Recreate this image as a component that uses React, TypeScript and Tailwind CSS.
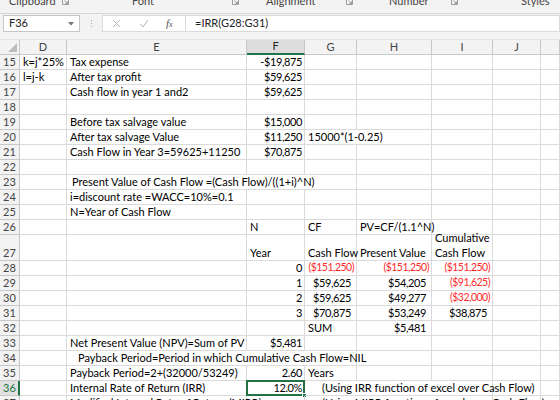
import React from 'react';

type Cell = {
  col: number;
  span?: number;
  text?: string;
  lines?: string[];
  right?: boolean;
  red?: boolean;
  pad?: boolean;
  indent?: string;
};

type Row = { n: number; tall?: boolean; cells: Cell[] };

const rows: Row[] = [
  { n: 15, cells: [{ col: 0, text: 'k=j*25%' }, { col: 1, text: 'Tax expense' }, { col: 2, text: '-$19,875', right: true }] },
  { n: 16, cells: [{ col: 0, text: 'l=j-k' }, { col: 1, text: 'After tax profit' }, { col: 2, text: '$59,625', right: true }] },
  { n: 17, cells: [{ col: 1, text: 'Cash flow in year 1 and2' }, { col: 2, text: '$59,625', right: true }] },
  { n: 18, cells: [] },
  { n: 19, cells: [{ col: 1, text: 'Before tax salvage value' }, { col: 2, text: '$15,000', right: true }] },
  {
    n: 20,
    cells: [
      { col: 1, text: 'After tax salvage Value' },
      { col: 2, text: '$11,250', right: true },
      { col: 3, span: 2, text: '15000*(1-0.25)' },
    ],
  },
  { n: 21, cells: [{ col: 1, text: 'Cash Flow in Year 3=59625+11250' }, { col: 2, text: '$70,875', right: true }] },
  { n: 22, cells: [] },
  { n: 23, cells: [{ col: 1, span: 3, text: 'Present Value of Cash Flow =(Cash Flow)/((1+i)^N)', indent: 'pl-[5px]' }] },
  { n: 24, cells: [{ col: 1, text: 'i=discount rate =WACC=10%=0.1' }] },
  { n: 25, cells: [{ col: 1, text: 'N=Year of Cash Flow' }] },
  { n: 26, cells: [{ col: 2, text: 'N' }, { col: 3, text: 'CF' }, { col: 4, text: 'PV=CF/(1.1^N)' }] },
  {
    n: 27,
    tall: true,
    cells: [
      { col: 2, text: 'Year' },
      { col: 3, text: 'Cash Flow' },
      { col: 4, text: 'Present Value' },
      { col: 5, lines: ['Cumulative', 'Cash Flow'] },
    ],
  },
  {
    n: 28,
    cells: [
      { col: 2, text: '0', right: true },
      { col: 3, text: '($151,250)', right: true, red: true },
      { col: 4, text: '($151,250)', right: true, red: true },
      { col: 5, text: '($151,250)', right: true, red: true },
    ],
  },
  {
    n: 29,
    cells: [
      { col: 2, text: '1', right: true },
      { col: 3, text: '$59,625', right: true, pad: true },
      { col: 4, text: '$54,205', right: true, pad: true },
      { col: 5, text: '($91,625)', right: true, red: true },
    ],
  },
  {
    n: 30,
    cells: [
      { col: 2, text: '2', right: true },
      { col: 3, text: '$59,625', right: true, pad: true },
      { col: 4, text: '$49,277', right: true, pad: true },
      { col: 5, text: '($32,000)', right: true, red: true },
    ],
  },
  {
    n: 31,
    cells: [
      { col: 2, text: '3', right: true },
      { col: 3, text: '$70,875', right: true, pad: true },
      { col: 4, text: '$53,249', right: true, pad: true },
      { col: 5, text: '$38,875', right: true, pad: true },
    ],
  },
  { n: 32, cells: [{ col: 3, text: 'SUM' }, { col: 4, text: '$5,481', right: true, pad: true }] },
  { n: 33, cells: [{ col: 1, text: 'Net Present Value (NPV)=Sum of PV' }, { col: 2, text: '$5,481', right: true }] },
  {
    n: 34,
    cells: [{ col: 1, span: 3, text: 'Payback Period=Period in which Cumulative Cash Flow=NIL', indent: 'pl-[11px]' }],
  },
  {
    n: 35,
    cells: [
      { col: 1, text: 'Payback Period=2+(32000/53249)' },
      { col: 2, text: '2.60', right: true },
      { col: 3, text: 'Years' },
    ],
  },
  {
    n: 36,
    cells: [
      { col: 1, text: 'Internal Rate of Return (IRR)' },
      { col: 2, text: '12.0%', right: true },
      { col: 3, span: 3, text: '(Using IRR function of excel over Cash Flow)', indent: 'pl-[17px]' },
    ],
  },
  {
    n: 37,
    cells: [
      { col: 1, text: 'Modified Internal Rate of Return (MIRR)' },
      { col: 3, span: 3, text: '(Using MIRR function of excel over Cash Flow)', indent: 'pl-[17px]' },
    ],
  },
];

const colNames = ['D', 'E', 'F', 'G', 'H', 'I', 'J', ''];
const gridCols = 'grid grid-cols-[20px_47px_180px_58px_52px_75px_61px_48px_1fr]';

function fillRow(cells: Cell[]): Cell[] {
  const out: Cell[] = [];
  let c = 0;
  while (c < 8) {
    const found = cells.find((x) => x.col === c);
    if (found) {
      out.push(found);
      c += found.span ?? 1;
    } else {
      out.push({ col: c });
      c += 1;
    }
  }
  return out;
}

function Launcher() {
  return (
    <svg width="7" height="7" viewBox="0 0 7 7" className="text-[#888]">
      <path d="M0.5 6.5V0.5h6v6z" fill="none" stroke="currentColor" strokeWidth="0.8" />
      <path d="M2.5 2.5l3 3M3.5 5.5h2v-2" fill="none" stroke="currentColor" strokeWidth="0.8" />
    </svg>
  );
}

function Ribbon() {
  const groups = [
    { label: 'Clipboard', w: 'w-[70px]', tx: 'pl-[9px]' },
    { label: 'Font', w: 'w-[170px]', tx: 'pl-[62px]' },
    { label: 'Alignment', w: 'w-[114px]', tx: 'pl-[26px]' },
    { label: 'Number', w: 'w-[105px]', tx: 'pl-[35px]' },
  ];
  return (
    <div className="h-[14px] bg-[#f3f3f3] border-b border-[#d6d6d6] flex items-start overflow-hidden">
      {groups.map((g) => (
        <div key={g.label} className={`${g.w} shrink-0 flex items-start justify-between pr-[1px] ${g.tx}`}>
          <span className="text-[11px] leading-[11px] -mt-[5px] text-[#444]">{g.label}</span>
          <span className="-mt-[2px]">
            <Launcher />
          </span>
        </div>
      ))}
      <span className="text-[11px] leading-[11px] -mt-[5px] text-[#444] pl-[62px]">Styles</span>
    </div>
  );
}

function FormulaBar() {
  return (
    <div className="h-[26px] bg-[#f3f3f3] flex items-start pt-[1px] border-b border-[#e3e3e3]">
      <div className="ml-[3px] w-[77px] h-[17px] bg-white border border-[#c6c6c6] flex items-center justify-between pl-[5px] pr-[5px]">
        <span className="text-[11px] text-[#222]">F36</span>
        <svg width="6" height="4" viewBox="0 0 6 4">
          <path d="M0 0h6L3 3.5z" fill="#777" />
        </svg>
      </div>
      <div className="w-[22px] h-[17px] flex flex-col items-center justify-center gap-[2px]">
        <span className="w-[1px] h-[1px] bg-[#aaa]" />
        <span className="w-[1px] h-[1px] bg-[#aaa]" />
        <span className="w-[1px] h-[1px] bg-[#aaa]" />
      </div>
      <div className="w-[83px] h-[17px] bg-white border border-[#dadada] border-r-0 flex items-center">
        <svg width="9" height="9" viewBox="0 0 9 9" className="ml-[9px]">
          <path d="M1 1l7 7M8 1L1 8" stroke="#b5b5b5" strokeWidth="1" />
        </svg>
        <svg width="10" height="9" viewBox="0 0 10 9" className="ml-[18px]">
          <path d="M1 5l3 3 5-7" stroke="#b5b5b5" strokeWidth="1" fill="none" />
        </svg>
        <span className="ml-[17px] text-[11px] italic text-[#555] font-['Liberation_Serif',serif]">
          f<span className="text-[8px]">x</span>
        </span>
      </div>
      <div className="flex-1 h-[17px] bg-white border border-[#dadada] flex items-center pl-[9px]">
        <span className="text-[11px] text-[#222]">=IRR(G28:G31)</span>
      </div>
    </div>
  );
}

function ColumnHeaders() {
  return (
    <div className={`${gridCols} grid-rows-[15px] h-[15px] bg-[#f3f3f3]`}>
      <div className="border-r border-b border-[#c8c8c8] relative">
        <svg width="9" height="9" viewBox="0 0 9 9" className="absolute right-[2px] bottom-[2px]">
          <path d="M9 0V9H0z" fill="#bdbdbd" />
        </svg>
      </div>
      {colNames.map((c) => (
        <div
          key={c}
          className={
            c === 'F'
              ? 'bg-[#dcdcdc] border-r border-[#c8c8c8] border-b-2 border-b-[#217346] flex items-center justify-center text-[11px] text-[#262626]'
              : 'border-r border-b border-[#c8c8c8] flex items-center justify-center text-[11px] text-[#444]'
          }
        >
          {c}
        </div>
      ))}
    </div>
  );
}

function SheetRow({ row }: { row: Row }) {
  const sel = row.n === 36;
  const h = row.tall ? 'h-[26px] grid-rows-[26px]' : 'h-[15px] grid-rows-[15px]';
  return (
    <div className={`${gridCols} ${h}`}>
      <div
        className={
          sel
            ? 'bg-[#e1e1e1] border-r-2 border-r-[#217346] border-b border-b-[#c8c8c8] flex items-end pb-[1px] pl-[3px] text-[11px] leading-[12px] text-[#217346]'
            : 'bg-[#f3f3f3] border-r border-b border-[#c8c8c8] flex items-end pb-[1px] pl-[3px] text-[11px] leading-[12px] text-[#444]'
        }
      >
        {row.n}
      </div>
      {fillRow(row.cells).map((c) => {
        const isSel = sel && c.col === 2;
        const span = c.span === 3 ? 'col-span-3' : c.span === 2 ? 'col-span-2' : '';
        const align = c.right
          ? `justify-end ${c.red ? 'tracking-[-0.5px] text-[10.5px]' : 'tracking-[-0.4px] text-[11px]'} ${c.pad ? 'pr-[5px]' : 'pr-[2px]'}`
          : `${c.indent ?? 'pl-[3px]'} text-[11px]`;
        return (
          <div
            key={c.col}
            className={[
              'relative min-w-0 border-r border-b border-[#dadada] flex items-end whitespace-nowrap overflow-visible',
              c.lines ? 'pb-0' : 'pb-[1px] leading-[13px]',
              span,
              align,
              c.red ? 'text-[#ff2a2a]' : 'text-black',
            ].join(' ')}
          >
            {c.lines ? (
              <div className="flex flex-col leading-[15px]">
                {c.lines.map((l) => (
                  <span key={l}>{l}</span>
                ))}
              </div>
            ) : (
              c.text
            )}
            {isSel && (
              <>
                <div className="absolute -left-[1px] -top-[1px] right-[-1px] bottom-[-1px] border-2 border-[#217346]" />
                <div className="absolute right-[-3px] bottom-[-3px] w-[5px] h-[5px] bg-[#217346] border border-white" />
              </>
            )}
          </div>
        );
      })}
    </div>
  );
}

export default function App() {
  return (
    <div className="w-[560px] h-[400px] overflow-hidden bg-white font-['Lato','Liberation_Sans',sans-serif]">
      <Ribbon />
      <FormulaBar />
      <ColumnHeaders />
      {rows.map((r) => (
        <SheetRow key={r.n} row={r} />
      ))}
    </div>
  );
}
